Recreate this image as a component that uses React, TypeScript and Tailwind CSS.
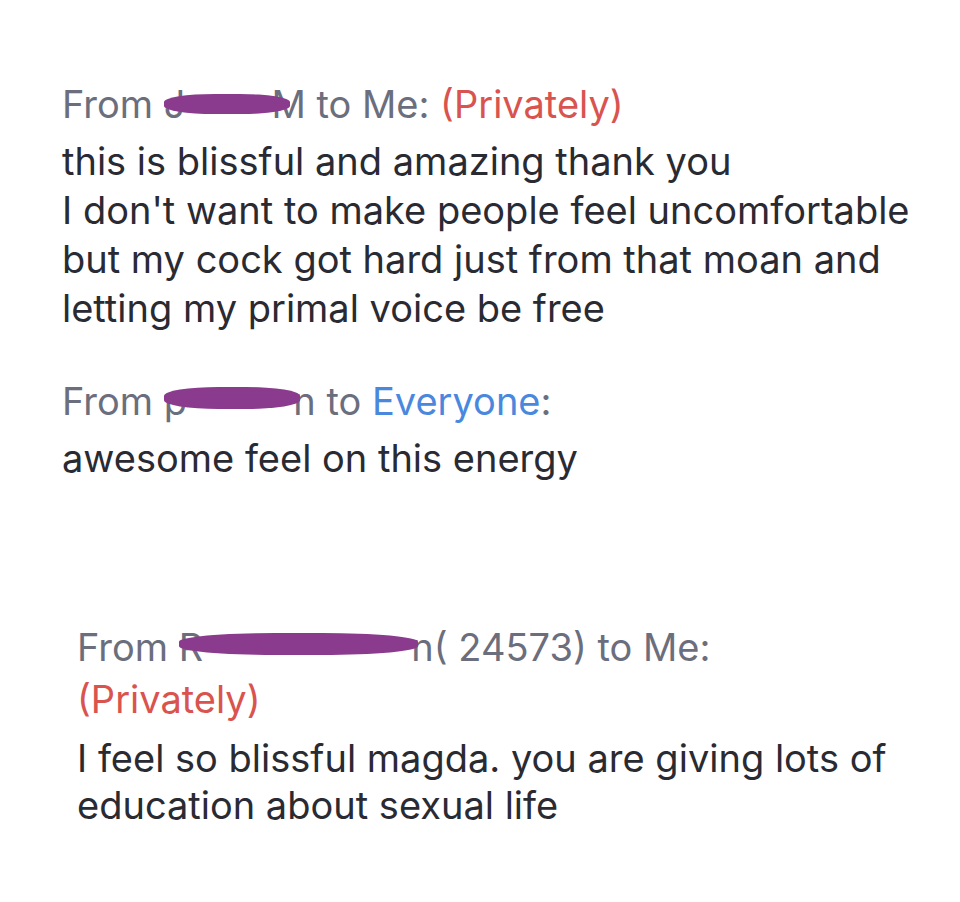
const Redact = ({ w, lead, tail, top, h }: { w: number; lead?: string; tail?: string; top: number; h: number }) => (
  <span className="relative inline-block whitespace-nowrap" style={{ width: w }}>
    <span className="text-[#6b6e7d]">{lead}</span>
    <span className="absolute right-0 text-[#6b6e7d]">{tail}</span>
    <span
      className="absolute left-0 right-4 rounded-[40%] bg-[#8a3b8e] blur-[0.7px]"
      style={{ top, height: h }}
    />
  </span>
);

export default function App() {
  return (
    <div className="min-h-[902px] w-[960px] bg-white font-['Inter','Liberation_Sans',sans-serif] text-[38px]">
      {/* Message 1 */}
      <div className="pl-[62px] pt-[80px]">
        <div className="leading-[49px] text-[#6b6e7d]">
          From <Redact w={142} lead="J" tail="M" top={14} h={20} /> to Me: <span className="text-[#d9534f]">(Privately)</span>
        </div>
        <div className="mt-2 leading-[49px] text-[#2a2a33]">
          <div>this is blissful and amazing thank you</div>
          <div>I don't want to make people feel uncomfortable</div>
          <div>but my cock got hard just from that moan and</div>
          <div>letting my primal voice be free</div>
        </div>
      </div>

      {/* Message 2 */}
      <div className="pl-[62px] pt-[44px]">
        <div className="leading-[49px] text-[#6b6e7d]">
          From <Redact w={152} lead="p" tail="n" top={10} h={22} /> to <span className="text-[#4a88de]">Everyone</span>:
        </div>
        <div className="mt-2 leading-[49px] text-[#2a2a33]">awesome feel on this energy</div>
      </div>

      {/* Message 3 */}
      <div className="pl-[77px] pt-[138px]">
        <div className="leading-[52px] text-[#6b6e7d]">
          <div>
            From <Redact w={255} lead="R" tail="n" top={12} h={22} />( 24573) to Me:
          </div>
          <div className="text-[#d9534f]">(Privately)</div>
        </div>
        <div className="mt-[10px] leading-[47px] text-[#2a2a33]">
          <div>I feel so blissful magda. you are giving lots of</div>
          <div>education about sexual life</div>
        </div>
      </div>
    </div>
  );
}
